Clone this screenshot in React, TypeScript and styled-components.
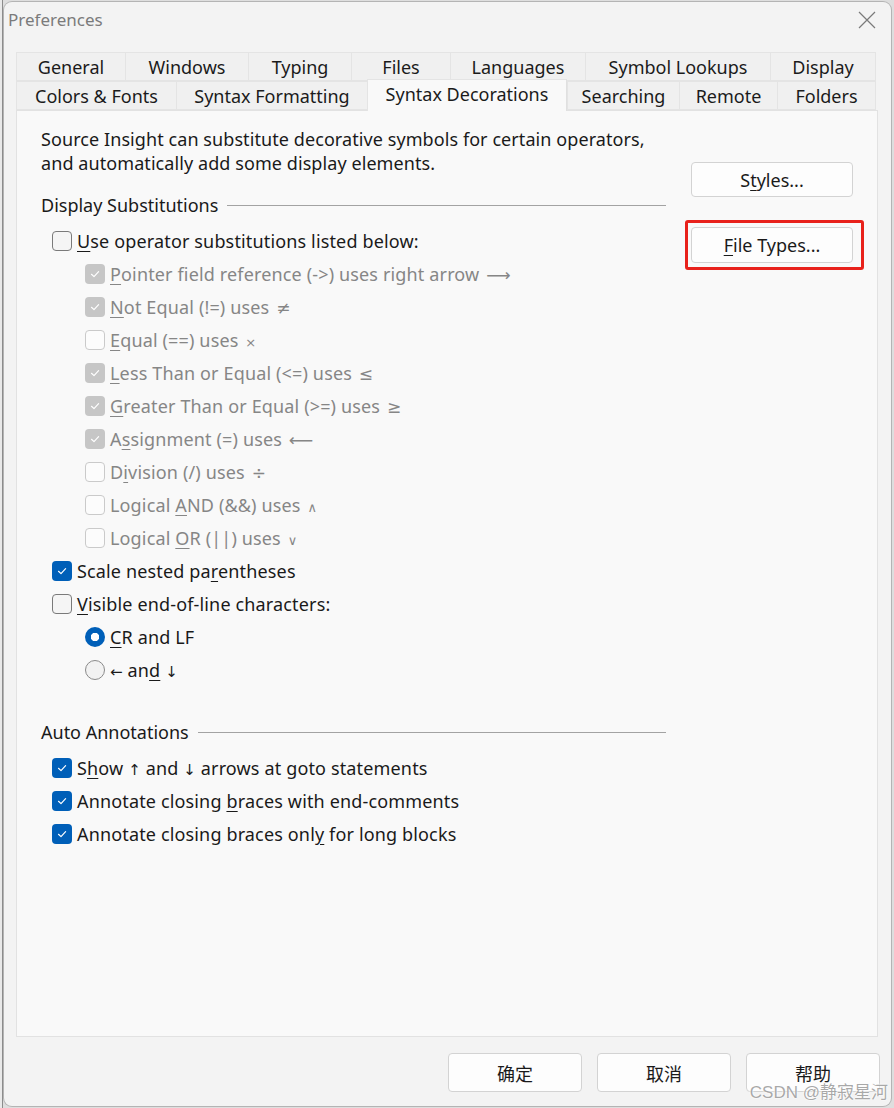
import React from "react";
import styled, { createGlobalStyle } from "styled-components";

const GlobalStyle = createGlobalStyle`
  html, body {
    margin: 0;
    padding: 0;
  }
  body {
    width: 894px;
    height: 1108px;
    overflow: hidden;
    background: #c6c6c6;
    font-family: "Noto Sans", "Noto Sans CJK SC", sans-serif;
  }
`;

const Backdrop = styled.div`
  width: 894px;
  height: 1108px;
  box-sizing: border-box;
  padding: 2px 3px 2px 4px;
  background: linear-gradient(90deg, #e9e9e9 0, #e9e9e9 2px, #8c8c8c 2px, #8c8c8c 3px, #dedede 3px);
`;

const Dialog = styled.div`
  position: relative;
  width: 887px;
  height: 1104px;
  box-sizing: border-box;
  display: flex;
  flex-direction: column;
  background: #f3f3f3;
  border-radius: 8px;
  box-shadow: 0 0 0 1px #b4b4b4;
`;

const TitleBar = styled.div`
  height: 50px;
  box-sizing: border-box;
  display: flex;
  justify-content: space-between;
  align-items: flex-start;
  padding: 6px 15px 0 4px;
`;

const Title = styled.div`
  font-size: 17px;
  line-height: 24px;
  color: #7b7b7b;
`;

const CloseIcon = styled.svg`
  margin-top: 3px;
`;

const Tabs = styled.div`
  margin: 0 13px 0 12px;
  display: flex;
  flex-direction: column;
`;

const TabRow = styled.div`
  display: flex;
  height: 29px;
`;

const Tab = styled.div<{ $w: number; $active?: boolean }>`
  width: ${(p) => p.$w}px;
  box-sizing: border-box;
  display: flex;
  align-items: center;
  justify-content: center;
  font-size: 18px;
  color: #1b1b1b;
  white-space: nowrap;
  border: 1px solid #e4e4e4;
  border-right: none;
  &:last-child {
    border-right: 1px solid #e4e4e4;
  }
  background: ${(p) => (p.$active ? "#f9f9f9" : "#f0f0f0")};
  height: ${(p) => (p.$active ? "32px" : "29px")};
  margin-top: ${(p) => (p.$active ? "-2px" : "0")};
  padding-bottom: ${(p) => (p.$active ? "4px" : "0")};
  ${(p) => (p.$active ? "border-bottom: none; border-right: 1px solid #e0e0e0; position: relative; z-index: 1;" : "")}
`;

const Panel = styled.div`
  flex: 1;
  margin: 0 13px 0 12px;
  background: #f9f9f9;
  border: 1px solid #e2e2e2;
  display: grid;
  grid-template-columns: 625px 1fr;
  column-gap: 25px;
  align-items: start;
  padding: 16px 0 0 24px;
`;

const LeftColumn = styled.div`
  display: flex;
  flex-direction: column;
`;

const Intro = styled.p`
  margin: 0;
  font-size: 18px;
  line-height: 24px;
  letter-spacing: 0.08px;
  color: #1a1a1a;
`;

const SectionHeader = styled.div<{ $top: number }>`
  display: flex;
  align-items: center;
  gap: 9px;
  height: 24px;
  margin-top: ${(p) => p.$top}px;
  margin-bottom: 7px;
  font-size: 18px;
  color: #1a1a1a;
  white-space: nowrap;
`;

const Rule = styled.div`
  flex: 1;
  height: 1px;
  background: #a3a3a3;
`;

const Row = styled.div<{ $indent: number; $disabled?: boolean }>`
  display: flex;
  align-items: center;
  gap: 5px;
  height: 33px;
  padding-left: ${(p) => p.$indent}px;
  font-size: 18px;
  letter-spacing: 0.15px;
  color: ${(p) => (p.$disabled ? "#868686" : "#1a1a1a")};
  white-space: nowrap;
  u {
    text-underline-offset: 3px;
    text-decoration-thickness: 1px;
  }
`;

const Symbol = styled.span<{ $small?: boolean }>`
  font-family: "DejaVu Sans", sans-serif;
  font-size: ${(p) => (p.$small ? "13px" : "17px")};
  margin-left: 2px;
`;

const Arrow = styled.span`
  font-family: "DejaVu Sans", sans-serif;
  font-size: 15px;
`;

const Box = styled.span<{ $checked?: boolean; $disabled?: boolean }>`
  width: 20px;
  height: 20px;
  box-sizing: border-box;
  border-radius: 4px;
  display: flex;
  align-items: center;
  justify-content: center;
  flex-shrink: 0;
  ${(p) =>
    p.$checked
      ? `background: ${p.$disabled ? "#c6c6c6" : "#005fb8"}; border: none;`
      : `background: ${p.$disabled ? "#fcfcfc" : "#f5f5f5"}; border: 1px solid ${p.$disabled ? "#cacaca" : "#7a7a7a"};`}
`;

const Radio = styled.span<{ $checked?: boolean }>`
  width: 20px;
  height: 20px;
  box-sizing: border-box;
  border-radius: 50%;
  flex-shrink: 0;
  ${(p) =>
    p.$checked
      ? "background: radial-gradient(circle, #ffffff 0 4px, #005fb8 4.5px);"
      : "background: #f2f2f2; border: 1px solid #8a8a8a;"}
`;

const RightColumn = styled.div`
  display: flex;
  flex-direction: column;
  align-items: flex-start;
  padding-top: 35px;
`;

const Button = styled.div<{ $w: number; $h: number }>`
  width: ${(p) => p.$w}px;
  height: ${(p) => p.$h}px;
  box-sizing: border-box;
  display: flex;
  align-items: center;
  justify-content: center;
  background: #fdfdfd;
  border: 1px solid #d3d3d3;
  border-radius: 4px;
  font-size: 18px;
  color: #1a1a1a;
  u {
    text-underline-offset: 3px;
    text-decoration-thickness: 1px;
  }
`;

const Highlight = styled.div`
  margin: 23px 0 0 -6px;
  padding: 4px 8px 4px 3px;
  border: 3px solid #e8211b;
  border-radius: 3px;
`;

const Footer = styled.div`
  display: flex;
  justify-content: flex-end;
  gap: 15px;
  padding: 16px 11px 14px 0;
`;

const Watermark = styled.div`
  position: absolute;
  right: 3px;
  bottom: 3px;
  font-size: 17px;
  color: rgba(140, 140, 140, 0.75);
  text-shadow: 0 0 2px #fff, 0 0 2px #fff;
  font-family: "Liberation Sans", "Noto Sans CJK SC", sans-serif;
`;

function Check() {
  return (
    <svg width="12" height="12" viewBox="0 0 12 12">
      <path d="M2.5 6.3 L5 8.6 L9.6 3.6" fill="none" stroke="#fff" strokeWidth="1.2" strokeLinecap="round" strokeLinejoin="round" />
    </svg>
  );
}

type Item = { label: React.ReactNode; checked?: boolean; disabled?: boolean; indent: number };

function CheckRow({ label, checked, disabled, indent }: Item) {
  return (
    <Row $indent={indent} $disabled={disabled}>
      <Box $checked={checked} $disabled={disabled}>{checked && <Check />}</Box>
      <span>{label}</span>
    </Row>
  );
}

const row1 = [
  ["General", 109],
  ["Windows", 123],
  ["Typing", 103],
  ["Files", 99],
  ["Languages", 135],
  ["Symbol Lookups", 185],
  ["Display", 106],
] as const;

const row2 = [
  ["Colors & Fonts", 160],
  ["Syntax Formatting", 191],
  ["Syntax Decorations", 200],
  ["Searching", 112],
  ["Remote", 98],
  ["Folders", 99],
] as const;

const substitutions: Item[] = [
  { label: <><u>P</u>ointer field reference (-&gt;) uses right arrow <Symbol>⟶</Symbol></>, checked: true, disabled: true, indent: 44 },
  { label: <><u>N</u>ot Equal (!=) uses <Symbol>≠</Symbol></>, checked: true, disabled: true, indent: 44 },
  { label: <><u>E</u>qual (==) uses <Symbol $small>×</Symbol></>, disabled: true, indent: 44 },
  { label: <><u>L</u>ess Than or Equal (&lt;=) uses <Symbol>≤</Symbol></>, checked: true, disabled: true, indent: 44 },
  { label: <><u>G</u>reater Than or Equal (&gt;=) uses <Symbol>≥</Symbol></>, checked: true, disabled: true, indent: 44 },
  { label: <>A<u>s</u>signment (=) uses <Symbol>⟵</Symbol></>, checked: true, disabled: true, indent: 44 },
  { label: <>D<u>i</u>vision (/) uses <Symbol>÷</Symbol></>, disabled: true, indent: 44 },
  { label: <>Logical <u>A</u>ND (&amp;&amp;) uses <Symbol $small>∧</Symbol></>, disabled: true, indent: 44 },
  { label: <>Logical <u>O</u>R (||) uses <Symbol $small>∨</Symbol></>, disabled: true, indent: 44 },
];

const annotations: Item[] = [
  { label: <>S<u>h</u>ow <Arrow>↑</Arrow> and <Arrow>↓</Arrow> arrows at goto statements</>, checked: true, indent: 11 },
  { label: <>Annotate closing <u>b</u>races with end-comments</>, checked: true, indent: 11 },
  { label: <>Annotate closing braces onl<u>y</u> for long blocks</>, checked: true, indent: 11 },
];

export default function App() {
  return (
    <>
      <GlobalStyle />
      <Backdrop>
        <Dialog>
          <TitleBar>
            <Title>Preferences</Title>
            <CloseIcon width="18" height="18" viewBox="0 0 18 18">
              <path d="M1 1 L17 17 M17 1 L1 17" stroke="#7a7a7a" strokeWidth="1.2" />
            </CloseIcon>
          </TitleBar>

          <Tabs>
            <TabRow>
              {row1.map(([name, w]) => (
                <Tab key={name} $w={w}>{name}</Tab>
              ))}
            </TabRow>
            <TabRow>
              {row2.map(([name, w]) => (
                <Tab key={name} $w={w} $active={name === "Syntax Decorations"}>{name}</Tab>
              ))}
            </TabRow>
          </Tabs>

          <Panel>
            <LeftColumn>
              <Intro>
                Source Insight can substitute decorative symbols for certain operators,
                <br />
                and automatically add some display elements.
              </Intro>

              <SectionHeader $top={18}>
                Display Substitutions
                <Rule />
              </SectionHeader>
              <CheckRow label={<><u>U</u>se operator substitutions listed below:</>} indent={11} />
              {substitutions.map((item, i) => (
                <CheckRow key={i} {...item} />
              ))}
              <CheckRow label={<>Scale nested pa<u>r</u>entheses</>} checked indent={11} />
              <CheckRow label={<><u>V</u>isible end-of-line characters:</>} indent={11} />
              <Row $indent={44}>
                <Radio $checked />
                <span><u>C</u>R and LF</span>
              </Row>
              <Row $indent={44}>
                <Radio />
                <span><Arrow>←</Arrow> an<u>d</u> <Arrow>↓</Arrow></span>
              </Row>

              <SectionHeader $top={34}>
                Auto Annotations
                <Rule />
              </SectionHeader>
              {annotations.map((item, i) => (
                <CheckRow key={i} {...item} />
              ))}
            </LeftColumn>

            <RightColumn>
              <Button $w={162} $h={35}>
                S<u>t</u>yles...
              </Button>
              <Highlight>
                <Button $w={162} $h={36}>
                  <u>F</u>ile Types...
                </Button>
              </Highlight>
            </RightColumn>
          </Panel>

          <Footer>
            <Button $w={134} $h={39}>确定</Button>
            <Button $w={134} $h={39}>取消</Button>
            <Button $w={134} $h={39}>帮助</Button>
          </Footer>

          <Watermark>CSDN @静寂星河</Watermark>
        </Dialog>
      </Backdrop>
    </>
  );
}
